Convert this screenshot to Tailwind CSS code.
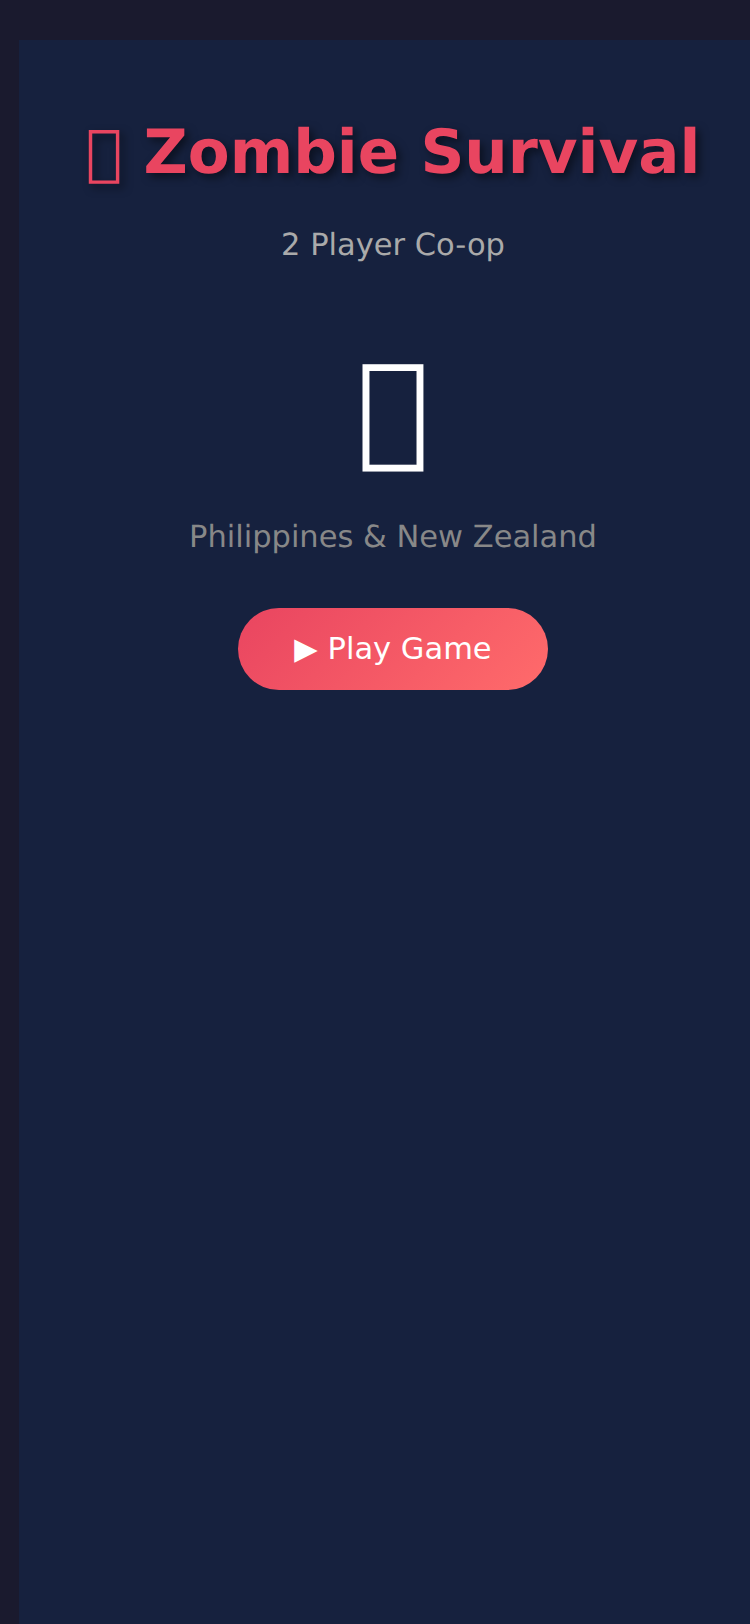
<!DOCTYPE html>
<html lang="en">
<head>
    <meta charset="UTF-8">
    <meta name="viewport" content="width=device-width, initial-scale=1.0">
    <title>Zombie Survival</title>
    <script src="https://cdn.jsdelivr.net/npm/@tailwindcss/browser@4"></script>
</head>
<body class="bg-[#1a1a2e] h-[1624px] overflow-hidden font-['DejaVu_Sans',sans-serif] [text-rendering:geometricPrecision]">
    <!-- Menu card, runs off the right edge -->
    <main class="ml-[19px] mt-[40px] w-[748px] h-[1584px] bg-[#16213e] flex flex-col items-center pt-[77px]">
        <h1 class="text-[61px] leading-[71px] font-bold whitespace-nowrap text-[#e94560] [text-shadow:4px_4px_8px_rgba(0,0,0,0.5)]">&#xE000; Zombie Survival</h1>
        <p class="mt-[40px] text-[30.5px] leading-[36px] text-[#aaaaaa]">2 Player Co-op</p>
        <div class="mt-[73px] text-[121.6px] leading-[142px] text-white">&#xE000;</div>
        <p class="mt-[41px] text-[30.5px] leading-[36px] text-[#888888]">Philippines &amp; New Zealand</p>
        <button class="mt-[52px] w-[310px] h-[82px] rounded-[41px] bg-linear-[135deg,#e94560,#ff6b6b] text-white text-[30.5px]">▶ Play Game</button>
    </main>
</body>
</html>
